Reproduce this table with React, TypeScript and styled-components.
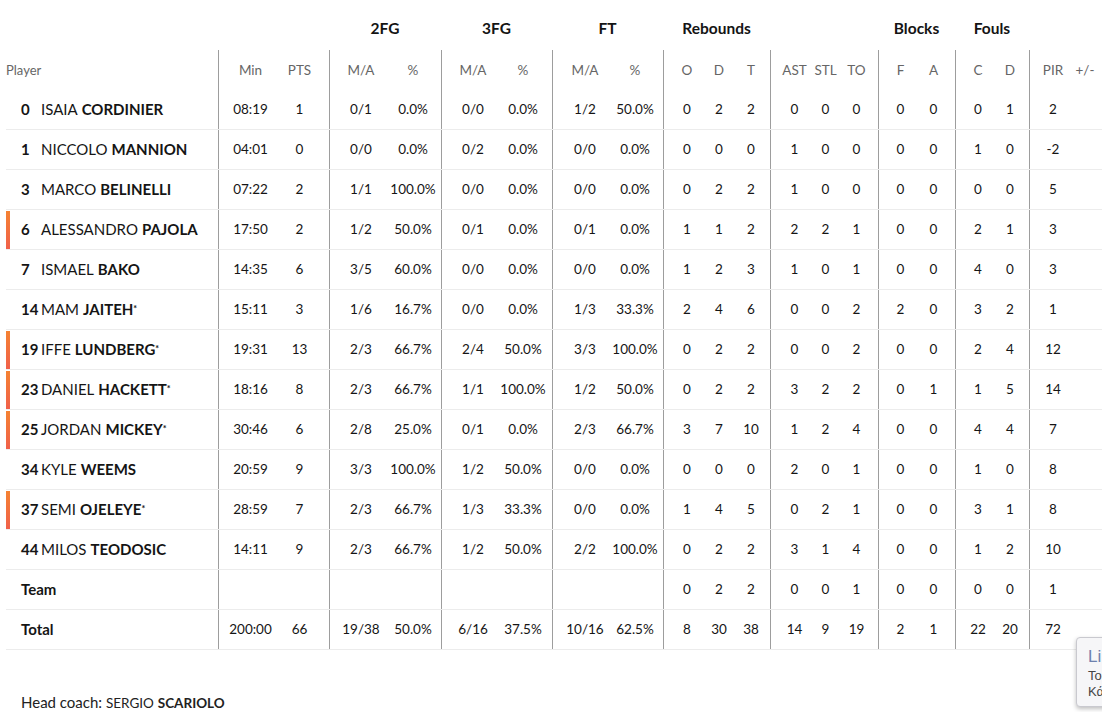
import React from "react";
import styled, { createGlobalStyle } from "styled-components";

const GlobalStyle = createGlobalStyle`
  html, body { margin: 0; padding: 0; background: #fff; }
  body { font-family: Lato, "Open Sans", Arial, sans-serif; color: #151515; }
`;

type GroupDef = { key: string; title?: string; width: number; pad: number; cell: number; cols: string[] };

const GROUPS: GroupDef[] = [
  { key: "mp", width: 111, pad: 7, cell: 49, cols: ["Min", "PTS"] },
  { key: "2fg", title: "2FG", width: 112, pad: 5, cell: 52, cols: ["M/A", "%"] },
  { key: "3fg", title: "3FG", width: 111, pad: 6, cell: 50, cols: ["M/A", "%"] },
  { key: "ft", title: "FT", width: 111, pad: 7, cell: 50, cols: ["M/A", "%"] },
  { key: "reb", title: "Rebounds", width: 107, pad: 7, cell: 32, cols: ["O", "D", "T"] },
  { key: "ast", width: 108, pad: 8, cell: 31, cols: ["AST", "STL", "TO"] },
  { key: "blk", title: "Blocks", width: 77, pad: 5, cell: 33, cols: ["F", "A"] },
  { key: "fl", title: "Fouls", width: 74, pad: 6, cell: 32, cols: ["C", "D"] },
  { key: "pir", width: 73, pad: 7, cell: 32, cols: ["PIR", "+/-"] },
];

type Player = { no?: string; first?: string; last?: string; label?: string; star?: boolean; mark?: boolean; stats: string[] };

const PLAYERS: Player[] = [
  { no: "0", first: "ISAIA", last: "CORDINIER", stats: ["08:19", "1", "0/1", "0.0%", "0/0", "0.0%", "1/2", "50.0%", "0", "2", "2", "0", "0", "0", "0", "0", "0", "1", "2", ""] },
  { no: "1", first: "NICCOLO", last: "MANNION", stats: ["04:01", "0", "0/0", "0.0%", "0/2", "0.0%", "0/0", "0.0%", "0", "0", "0", "1", "0", "0", "0", "0", "1", "0", "-2", ""] },
  { no: "3", first: "MARCO", last: "BELINELLI", stats: ["07:22", "2", "1/1", "100.0%", "0/0", "0.0%", "0/0", "0.0%", "0", "2", "2", "1", "0", "0", "0", "0", "0", "0", "5", ""] },
  { no: "6", first: "ALESSANDRO", last: "PAJOLA", mark: true, stats: ["17:50", "2", "1/2", "50.0%", "0/1", "0.0%", "0/1", "0.0%", "1", "1", "2", "2", "2", "1", "0", "0", "2", "1", "3", ""] },
  { no: "7", first: "ISMAEL", last: "BAKO", stats: ["14:35", "6", "3/5", "60.0%", "0/0", "0.0%", "0/0", "0.0%", "1", "2", "3", "1", "0", "1", "0", "0", "4", "0", "3", ""] },
  { no: "14", first: "MAM", last: "JAITEH", star: true, stats: ["15:11", "3", "1/6", "16.7%", "0/0", "0.0%", "1/3", "33.3%", "2", "4", "6", "0", "0", "2", "2", "0", "3", "2", "1", ""] },
  { no: "19", first: "IFFE", last: "LUNDBERG", star: true, mark: true, stats: ["19:31", "13", "2/3", "66.7%", "2/4", "50.0%", "3/3", "100.0%", "0", "2", "2", "0", "0", "2", "0", "0", "2", "4", "12", ""] },
  { no: "23", first: "DANIEL", last: "HACKETT", star: true, mark: true, stats: ["18:16", "8", "2/3", "66.7%", "1/1", "100.0%", "1/2", "50.0%", "0", "2", "2", "3", "2", "2", "0", "1", "1", "5", "14", ""] },
  { no: "25", first: "JORDAN", last: "MICKEY", star: true, mark: true, stats: ["30:46", "6", "2/8", "25.0%", "0/1", "0.0%", "2/3", "66.7%", "3", "7", "10", "1", "2", "4", "0", "0", "4", "4", "7", ""] },
  { no: "34", first: "KYLE", last: "WEEMS", stats: ["20:59", "9", "3/3", "100.0%", "1/2", "50.0%", "0/0", "0.0%", "0", "0", "0", "2", "0", "1", "0", "0", "1", "0", "8", ""] },
  { no: "37", first: "SEMI", last: "OJELEYE", star: true, mark: true, stats: ["28:59", "7", "2/3", "66.7%", "1/3", "33.3%", "0/0", "0.0%", "1", "4", "5", "0", "2", "1", "0", "0", "3", "1", "8", ""] },
  { no: "44", first: "MILOS", last: "TEODOSIC", stats: ["14:11", "9", "2/3", "66.7%", "1/2", "50.0%", "2/2", "100.0%", "0", "2", "2", "3", "1", "4", "0", "0", "1", "2", "10", ""] },
  { label: "Team", stats: ["", "", "", "", "", "", "", "", "0", "2", "2", "0", "0", "1", "0", "0", "0", "0", "1", ""] },
  { label: "Total", stats: ["200:00", "66", "19/38", "50.0%", "6/16", "37.5%", "10/16", "62.5%", "8", "30", "38", "14", "9", "19", "2", "1", "22", "20", "72", ""] },
];

const Page = styled.div`
  position: relative;
  width: 1102px;
  height: 712px;
  overflow: hidden;
  padding-left: 6px;
  box-sizing: border-box;
`;

const Table = styled.div`
  display: flex;
  flex-direction: column;
  width: 1096px;
`;

const TitleRow = styled.div`
  display: flex;
  height: 50px;
  padding-top: 5px;
  box-sizing: border-box;
`;

const TitleCell = styled.div<{ $w: number }>`
  width: ${(p) => p.$w}px;
  flex: none;
  display: flex;
  align-items: center;
  justify-content: center;
  font-size: 15.5px;
  font-weight: 700;
  color: #141414;
`;

const Row = styled.div<{ $sep?: boolean }>`
  display: flex;
  height: 40px;
  box-sizing: border-box;
  ${(p) => (p.$sep ? "border-bottom: 1px solid #ececec;" : "")}
`;

const PlayerCell = styled.div`
  width: 212px;
  flex: none;
  display: flex;
  align-items: stretch;
`;

const Marker = styled.div<{ $on?: boolean }>`
  width: 4px;
  margin: 1px 11px 0 0;
  background: ${(p) => (p.$on ? "linear-gradient(180deg, #f58232 0%, #f0604a 100%)" : "transparent")};
`;

const PlayerText = styled.div`
  display: flex;
  align-items: center;
  padding-bottom: 1px;
  font-size: 15px;
  color: #151515;
  white-space: nowrap;
`;

const HeadLabel = styled.div`
  display: flex;
  align-items: center;
  font-size: 13px;
  color: #666;
`;

const Num = styled.span`
  width: 20px;
  font-weight: 700;
`;

const Last = styled.span`
  font-weight: 700;
  margin-left: 4px;
`;

const Star = styled.sup`
  font-size: 9px;
  font-weight: 700;
  vertical-align: 5px;
  line-height: 0;
`;

const RowLabel = styled.span`
  font-weight: 700;
`;

const Group = styled.div<{ $w: number; $pad: number }>`
  width: ${(p) => p.$w}px;
  flex: none;
  display: flex;
  box-sizing: border-box;
  padding-left: ${(p) => p.$pad}px;
  border-left: 1px solid #9d9d9d;
`;

const Cell = styled.div<{ $w: number; $head?: boolean }>`
  width: ${(p) => p.$w}px;
  flex: none;
  display: flex;
  align-items: center;
  justify-content: center;
  padding-bottom: 1px;
  font-size: 13.5px;
  color: ${(p) => (p.$head ? "#666" : "#151515")};
  white-space: nowrap;
`;

const Coach = styled.div`
  margin: 43px 0 0 15px;
  font-size: 15px;
  color: #222;
`;

const CoachFirst = styled.span`
  font-size: 13.5px;
`;

const CoachLast = styled.span`
  font-size: 13.5px;
  font-weight: 700;
`;

const Toast = styled.div`
  position: absolute;
  left: 1076px;
  top: 637px;
  width: 160px;
  height: 70px;
  box-sizing: border-box;
  padding: 8px 0 0 11px;
  background: #f6f6f8;
  border: 1px solid #c9c9cf;
  border-radius: 4px;
  box-shadow: 0 2px 4px rgba(0, 0, 0, 0.25);
  font-family: "Liberation Sans", Arial, sans-serif;
`;

const ToastTitle = styled.div`
  font-size: 17px;
  color: #6d80ad;
  line-height: 22px;
`;

const ToastLine = styled.div`
  font-size: 13px;
  color: #444;
  line-height: 16px;
`;

function StatGroups({ values, head }: { values: string[]; head?: boolean }) {
  let i = 0;
  return (
    <>
      {GROUPS.map((g) => (
        <Group key={g.key} $w={g.width} $pad={g.pad}>
          {g.cols.map((c) => {
            const v = values[i++];
            return (
              <Cell key={c + i} $w={g.cell} $head={head}>
                {v}
              </Cell>
            );
          })}
        </Group>
      ))}
    </>
  );
}

export default function App() {
  const headValues = GROUPS.flatMap((g) => g.cols);
  return (
    <Page>
      <GlobalStyle />
      <Table>
        <TitleRow>
          <TitleCell $w={212} />
          {GROUPS.map((g) => (
            <TitleCell key={g.key} $w={g.width}>
              {g.title ?? ""}
            </TitleCell>
          ))}
        </TitleRow>
        <Row>
          <PlayerCell>
            <HeadLabel>Player</HeadLabel>
          </PlayerCell>
          <StatGroups values={headValues} head />
        </Row>
        {PLAYERS.map((p, idx) => (
          <Row key={idx} $sep>
            <PlayerCell>
              <Marker $on={p.mark} />
              <PlayerText>
                {p.label ? (
                  <RowLabel>{p.label}</RowLabel>
                ) : (
                  <>
                    <Num>{p.no}</Num>
                    {p.first}
                    <Last>{p.last}</Last>
                    {p.star && <Star>*</Star>}
                  </>
                )}
              </PlayerText>
            </PlayerCell>
            <StatGroups values={p.stats} />
          </Row>
        ))}
      </Table>
      <Coach>
        Head coach: <CoachFirst>SERGIO</CoachFirst> <CoachLast>SCARIOLO</CoachLast>
      </Coach>
      <Toast>
        <ToastTitle>Li</ToastTitle>
        <ToastLine>To</ToastLine>
        <ToastLine>Κά</ToastLine>
      </Toast>
    </Page>
  );
}
